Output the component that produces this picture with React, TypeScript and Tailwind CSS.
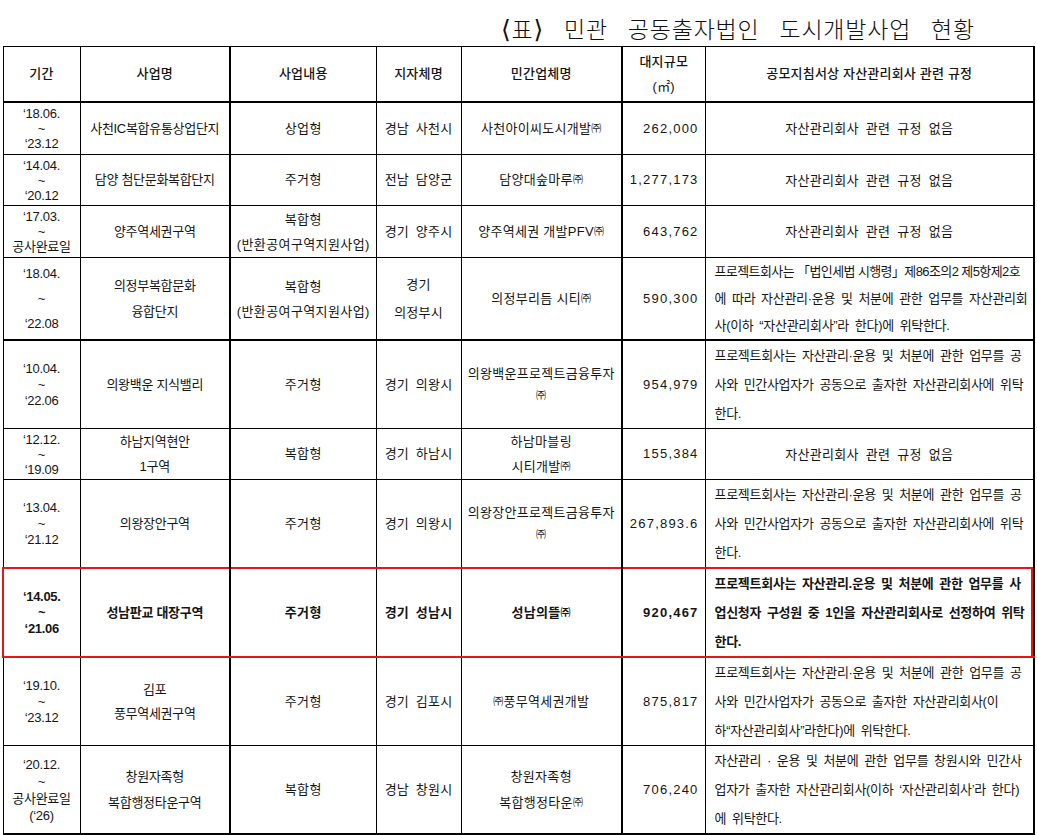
const JU = () => <span className="text-[10px] align-[1px]">㈜</span>;

type Row = {
  h: string;
  date: string[];
  dateLead: string;
  name: React.ReactNode;
  kind: React.ReactNode;
  city: React.ReactNode;
  firm: React.ReactNode;
  area: string;
  rule: string | string[];
  ruleLead?: string;
  thickBottom?: boolean;
  red?: boolean;
};

const none = "자산관리회사 관련 규정 없음";

const rows: Row[] = [
  {
    h: "h-[53px]",
    date: ["‘18.06.", "~", "‘23.12"],
    dateLead: "leading-[15px]",
    name: "사천IC복합유통상업단지",
    kind: "상업형",
    city: "경남 사천시",
    firm: <>사천아이씨도시개발<JU /></>,
    area: "262,000",
    rule: none,
  },
  {
    h: "h-[51px]",
    date: ["‘14.04.", "~", "‘20.12"],
    dateLead: "leading-[15px]",
    name: "담양 첨단문화복합단지",
    kind: "주거형",
    city: "전남 담양군",
    firm: <>담양대숲마루<JU /></>,
    area: "1,277,173",
    rule: none,
  },
  {
    h: "h-[52px]",
    date: ["‘17.03.", "~", "공사완료일"],
    dateLead: "leading-[15px]",
    name: "양주역세권구역",
    kind: <div className="leading-[25px]">복합형<br />(반환공여구역지원사업)</div>,
    city: "경기 양주시",
    firm: <>양주역세권 개발PFV<JU /></>,
    area: "643,762",
    rule: none,
  },
  {
    h: "h-[80px]",
    date: ["‘18.04.", "~", "‘22.08"],
    dateLead: "leading-[25px]",
    name: <div className="leading-[26px]">의정부복합문화<br />융합단지</div>,
    kind: <div className="leading-[25px]">복합형<br />(반환공여구역지원사업)</div>,
    city: <div className="leading-[28px]">경기<br />의정부시</div>,
    firm: <>의정부리듬 시티<JU /></>,
    area: "590,300",
    rule: [
      "프로젝트회사는 「법인세법 시행령」제86조의2 제5항제2호",
      "에 따라 자산관리·운용 및 처분에 관한 업무를 자산관리회",
      "사(이하 “자산관리회사”라 한다)에 위탁한다.",
    ],
    ruleLead: "leading-[27px]",
    thickBottom: true,
  },
  {
    h: "h-[88px]",
    date: ["‘10.04.", "~", "‘22.06"],
    dateLead: "leading-[16px]",
    name: "의왕백운 지식밸리",
    kind: "주거형",
    city: "경기 의왕시",
    firm: <div className="leading-[22px]">의왕백운프로젝트금융투자<br /><JU /></div>,
    area: "954,979",
    rule: [
      "프로젝트회사는 자산관리·운용 및 처분에 관한 업무를 공",
      "사와 민간사업자가 공동으로 출자한 자산관리회사에 위탁",
      "한다.",
    ],
  },
  {
    h: "h-[50px]",
    date: ["‘12.12.", "~", "‘19.09"],
    dateLead: "leading-[15px]",
    name: <div className="leading-[25px]">하남지역현안<br />1구역</div>,
    kind: "복합형",
    city: "경기 하남시",
    firm: <div className="leading-[25px]">하남마블링<br />시티개발<JU /></div>,
    area: "155,384",
    rule: none,
  },
  {
    h: "h-[88px]",
    date: ["‘13.04.", "~", "‘21.12"],
    dateLead: "leading-[16px]",
    name: "의왕장안구역",
    kind: "주거형",
    city: "경기 의왕시",
    firm: <div className="leading-[22px]">의왕장안프로젝트금융투자<br /><JU /></div>,
    area: "267,893.6",
    rule: [
      "프로젝트회사는 자산관리·운용 및 처분에 관한 업무를 공",
      "사와 민간사업자가 공동으로 출자한 자산관리회사에 위탁",
      "한다.",
    ],
  },
  {
    h: "h-[87px]",
    date: ["‘14.05.", "~", "‘21.06"],
    dateLead: "leading-[16px]",
    name: "성남판교 대장구역",
    kind: "주거형",
    city: "경기 성남시",
    firm: <>성남의뜰<JU /></>,
    area: "920,467",
    rule: [
      "프로젝트회사는 자산관리.운용 및 처분에 관한 업무를 사",
      "업신청자 구성원 중 1인을 자산관리회사로 선정하여 위탁",
      "한다.",
    ],
    red: true,
  },
  {
    h: "h-[88px]",
    date: ["‘19.10.", "~", "‘23.12"],
    dateLead: "leading-[16px]",
    name: <div className="leading-[24px]">김포<br />풍무역세권구역</div>,
    kind: "주거형",
    city: "경기 김포시",
    firm: <><JU />풍무역세권개발</>,
    area: "875,817",
    rule: [
      "프로젝트회사는 자산관리·운용 및 처분에 관한 업무를 공",
      "사와 민간사업자가 공동으로 출자한 자산관리회사(이",
      "하“자산관리회사”라한다)에 위탁한다.",
    ],
  },
  {
    h: "h-[87px]",
    date: ["‘20.12.", "~", "공사완료일", "(‘26)"],
    dateLead: "leading-[17px]",
    name: <div className="leading-[26px]">창원자족형<br />복합행정타운구역</div>,
    kind: "복합형",
    city: "경남 창원시",
    firm: <div className="leading-[26px]">창원자족형<br />복합행정타운<JU /></div>,
    area: "706,240",
    rule: [
      "자산관리 · 운용 및 처분에 관한 업무를 창원시와 민간사",
      "업자가 출자한 자산관리회사(이하 ‘자산관리회사’라 한다)",
      "에 위탁한다.",
    ],
  },
];

function Body({ r }: { r: Row }) {
  const b = r.thickBottom ? "border-b-2" : "";
  const red = r.red ? "border-y-2 border-y-[#e3161b] font-bold" : "";
  const cell = `border border-black align-middle ${b} ${red}`;
  return (
    <tr className={r.h}>
      <td className={`${cell} text-center ${r.dateLead} ${r.red ? "border-l-2 border-l-[#e3161b]" : ""}`}>
        {r.date.map((d, i) => (
          <div key={i}>{d}</div>
        ))}
      </td>
      <td className={`${cell} border-r-2 text-center`}>{r.name}</td>
      <td className={`${cell} text-center tracking-[0.4px]`}>{r.kind}</td>
      <td className={`${cell} text-center tracking-[0.2px] [word-spacing:3px]`}>{r.city}</td>
      <td className={`${cell} border-r-2 text-center tracking-[0.3px]`}>{r.firm}</td>
      <td className={`${cell} text-right pr-[6px] tracking-[1.2px]`}>{r.area}</td>
      <td
        className={`${cell} border-r-2 ${r.red ? "shadow-[inset_-2px_0_0_#e3161b]" : ""} ${
          Array.isArray(r.rule) ? "text-left pl-[9px]" : "text-center tracking-[0.3px] [word-spacing:3px]"
        } ${r.ruleLead ?? "leading-[29px]"}`}
      >
        {Array.isArray(r.rule)
          ? r.rule.map((l, i) => (
              <div
                key={i}
                className={`whitespace-nowrap ${
                  l.includes("「") ? "tracking-[-0.6px]" : "tracking-[-0.3px] [word-spacing:2.5px]"
                }`}
              >
                {l}
              </div>
            ))
          : r.rule}
      </td>
    </tr>
  );
}

export default function App() {
  const th = "border border-black border-b-2 font-medium text-center align-middle tracking-[0.2px]";
  return (
    <div className="w-[1037px] h-[835px] bg-white text-[#151515] font-['Liberation_Sans','Noto_Sans_CJK_KR',sans-serif] text-[13px] tracking-[-0.3px]">
      <div className="flex justify-end pr-[62px] h-[46px] items-end pb-[2px]">
        <h1 className="font-['Noto_Sans_CJK_KR',serif] font-light text-[23px] leading-[28px] tracking-[0.8px] [word-spacing:14px] text-[#111]">
          <span className="font-['DejaVu_Serif',serif] text-[25px]">⟨</span>표<span className="font-['DejaVu_Serif',serif] text-[25px]">⟩</span> 민관 공동출자법인 도시개발사업 현황
        </h1>
      </div>
      <table className="ml-[2px] w-[1033px] table-fixed border-collapse border-r-2 border-b-2 border-black">
        <colgroup>
          <col className="w-[77px]" />
          <col className="w-[150px]" />
          <col className="w-[146px]" />
          <col className="w-[85px]" />
          <col className="w-[161px]" />
          <col className="w-[83px]" />
          <col />
        </colgroup>
        <thead>
          <tr className="h-[55px]">
            <th className={th}>기간</th>
            <th className={`${th} border-r-2`}>사업명</th>
            <th className={th}>사업내용</th>
            <th className={th}>지자체명</th>
            <th className={`${th} border-r-2`}>민간업체명</th>
            <th className={`${th} leading-[25px]`}>
              대지규모
              <br />
              <span className="font-normal">(㎡)</span>
            </th>
            <th className={`${th} border-r-2`}>공모지침서상 자산관리회사 관련 규정</th>
          </tr>
        </thead>
        <tbody>
          {rows.map((r, i) => (
            <Body key={i} r={r} />
          ))}
        </tbody>
      </table>
    </div>
  );
}
